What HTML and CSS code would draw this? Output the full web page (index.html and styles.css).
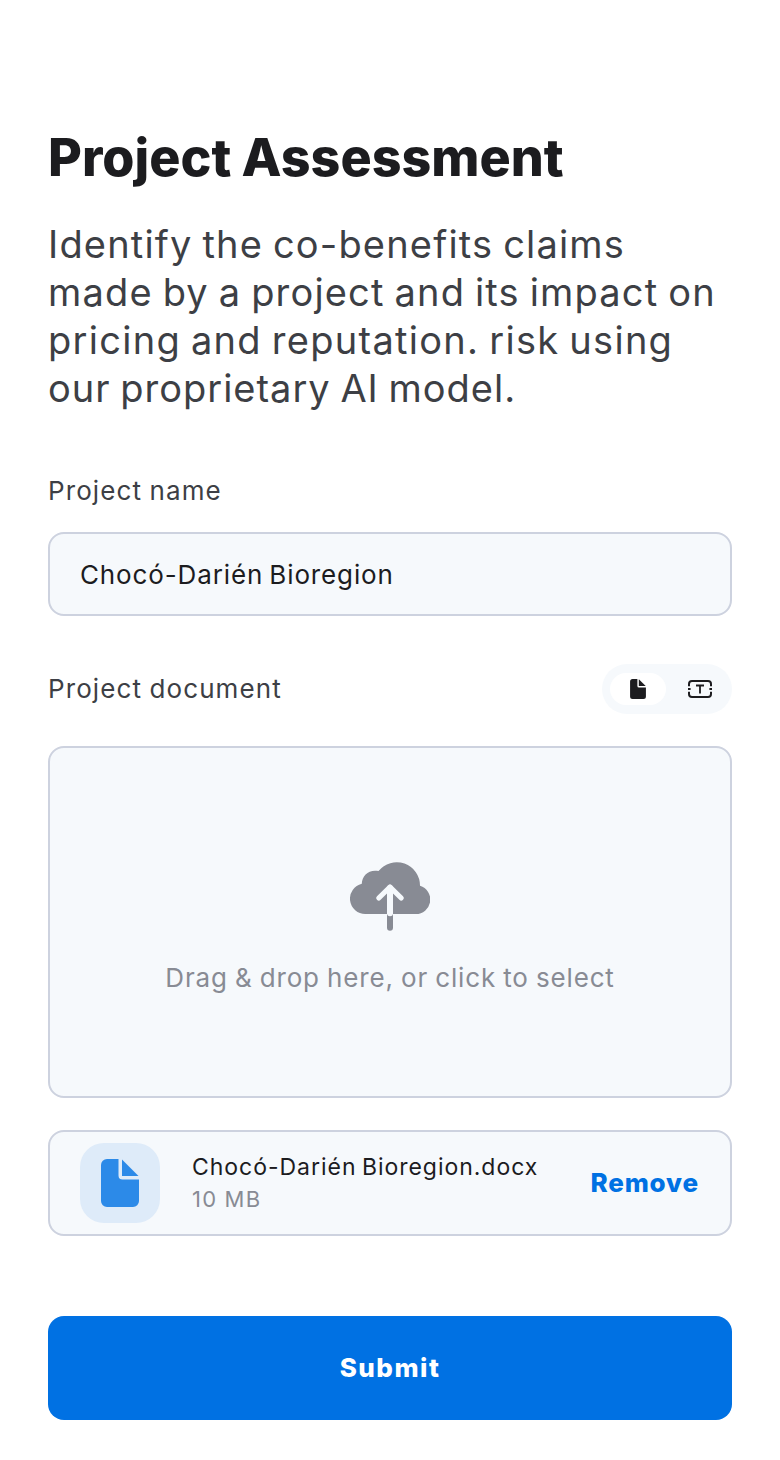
FILE: index.html
```html
<!DOCTYPE html>
<html lang="en">
<head>
<meta charset="utf-8">
<title>Project Assessment</title>
<link rel="stylesheet" href="styles.css">
</head>
<body>
<main class="page">
  <h1 class="title">Project Assessment</h1>
  <p class="intro">Identify the co-benefits claims<br>made by a project and its impact on<br><span class="third-line">pricing and reputation. risk using</span><br><span class="last-line">our proprietary AI model.</span></p>

  <div class="label">Project name</div>
  <div class="field">Chocó-Darién Bioregion</div>

  <div class="doc-head">
    <div class="label">Project document</div>
    <div class="toggle">
      <span class="toggle-item active">
        <svg width="16" height="20" viewBox="0 0 38 48" fill="#1c1c1f"><path d="M6 0h11.500v16.500a4 4 0 0 0 4 4H38V42a6 6 0 0 1-6 6H6a6 6 0 0 1-6-6V6a6 6 0 0 1 6-6z"/><path d="M21 0.500 37.500 17H21z"/></svg>
      </span>
      <span class="toggle-item">
        <svg width="24" height="18" viewBox="0 0 24 18" fill="none" stroke="#1c1c1f" stroke-width="2"><path d="M1 6.300V4a3 3 0 0 1 3-3h16a3 3 0 0 1 3 3v2.300M1 11.700V14a3 3 0 0 0 3 3h16a3 3 0 0 0 3-3v-2.300M0 9h2.600M21.400 9H24"/><path stroke-width="1.800" d="M8 5.500h8M12 5.500v8"/></svg>
      </span>
    </div>
  </div>

  <div class="dropzone">
    <svg class="cloud" width="80" height="70" viewBox="0 0 80 70">
      <path fill="#888b94" d="M15.500 53A15.300 15.300 0 0 1 11.800 22.800C12 14.500 19 8 28.500 10A23.300 23.300 0 0 1 70 24.800A14.400 14.400 0 0 1 65.600 53z"/>
      <path fill="none" stroke="#888b94" stroke-width="6" stroke-linecap="round" d="M40 53v13.800"/>
      <path fill="none" stroke="#f6f9fc" stroke-width="6" stroke-linecap="round" d="M40 52.300V27"/>
      <path fill="none" stroke="#f6f9fc" stroke-width="5.200" stroke-linecap="round" stroke-linejoin="round" d="M28.800 37 40 26 51.200 37"/>
    </svg>
    <div class="hint">Drag &amp; drop here, or click to select</div>
  </div>

  <div class="file">
    <div class="file-icon">
      <svg width="38" height="48" viewBox="0 0 38 48" fill="#2c8ae8"><path d="M6 0h11.500v16.500a4 4 0 0 0 4 4H38V42a6 6 0 0 1-6 6H6a6 6 0 0 1-6-6V6a6 6 0 0 1 6-6z"/><path d="M21 0.500 37.500 17H21z"/></svg>
    </div>
    <div class="file-info">
      <div class="file-name">Chocó-Darién Bioregion.docx</div>
      <div class="file-size">10 MB</div>
    </div>
    <div class="remove">Remove</div>
  </div>

  <button class="submit">Submit</button>
</main>
</body>
</html>
```
FILE: styles.css
```css
* { box-sizing: border-box; }
body { margin: 0; background: #fff; font-family: Inter, "Liberation Sans", sans-serif; }
.page { width: 780px; height: 1460px; padding: 126px 48px 40px; display: flex; flex-direction: column; }
.title { margin: 0; font-size: 52px; line-height: 64px; font-weight: 800; color: #1c1c1f; letter-spacing: 0; word-spacing: -1px; white-space: nowrap; }
.intro { margin: 30px 0 0; font-size: 38px; line-height: 48px; color: #3d3f45; letter-spacing: 1.18px; word-spacing: -2px; white-space: nowrap; }
.third-line { letter-spacing: 1.28px; }
.last-line { letter-spacing: 1px; }
.label { font-size: 26px; line-height: 32px; color: #3d3f45; letter-spacing: 1.1px; word-spacing: -1px; }
.intro + .label { margin-top: 63px; }
.field { margin-top: 25px; height: 84px; border: 2px solid #cdd2df; border-radius: 16px; background: #f6f9fc; padding: 0 30px; font-size: 26px; line-height: 81px; color: #1c1c1f; letter-spacing: .87px; word-spacing: -2px; }
.doc-head { margin-top: 48px; height: 50px; display: flex; justify-content: space-between; align-items: center; }
.toggle { width: 130px; height: 50px; padding: 8px; border-radius: 25px; background: #f6f9fc; display: flex; gap: 2px; align-items: center; }
.toggle-item { width: 56px; height: 32px; border-radius: 16px; display: flex; align-items: center; justify-content: center; }
.toggle-item + .toggle-item { padding-left: 8px; }
.active { background: #fff; }
.dropzone { margin-top: 32px; height: 352px; border: 2px solid #cdd2df; border-radius: 16px; background: #f6f9fc; display: flex; flex-direction: column; align-items: center; padding-top: 113px; }
.cloud { display: block; }
.hint { margin-top: 31px; font-size: 26px; line-height: 32px; color: #888b94; letter-spacing: .85px; word-spacing: -1px; white-space: nowrap; }
.file { margin-top: 32px; height: 106px; border: 2px solid #cdd2df; border-radius: 16px; background: #f6f9fc; padding: 0 31px 0 30px; display: flex; align-items: center; }
.file-icon { width: 80px; height: 80px; border-radius: 24px; background: #deebf9; display: flex; align-items: center; justify-content: center; }
.file-info { margin-left: 32px; flex: 1; white-space: nowrap; }
.file-name { font-size: 23px; line-height: 32px; color: #1c1c1f; letter-spacing: .97px; word-spacing: -2px; }
.file-size { font-size: 22px; line-height: 32px; color: #888b94; letter-spacing: 1.2px; }
.remove { font-size: 26px; line-height: 32px; font-weight: 800; color: #0071e3; letter-spacing: .85px; }
.submit { margin-top: 80px; height: 104px; border: 0; border-radius: 16px; background: #0071e3; color: #fff; font: 800 26px/32px Inter, "Liberation Sans", sans-serif; letter-spacing: 1.5px; }
```
